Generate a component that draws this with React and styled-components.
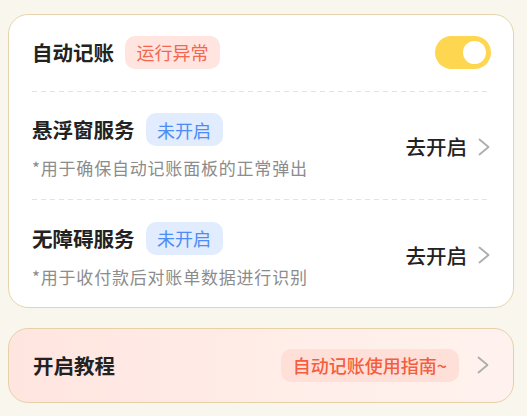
import React, { useState } from "react";
import styled, { createGlobalStyle } from "styled-components";

const GlobalStyle = createGlobalStyle`
  html, body { margin: 0; padding: 0; background: #f9f6ee; }
  body { font-family: "Noto Sans CJK SC", "Noto Sans", sans-serif; -webkit-font-smoothing: antialiased; }
  * { box-sizing: border-box; }
`;

const Page = styled.div`
  width: 527px;
  height: 416px;
  padding: 14px 13px 0 8px;
  display: flex;
  flex-direction: column;
  gap: 20px;
  background: #f9f6ee;
`;

const Card = styled.div`
  border: 1.5px solid #e6d4ae;
  border-radius: 20px;
  background: #ffffff;
  padding: 0 22px 0 23px;
`;

const GuideCard = styled.div`
  border: 1.5px solid #e8d0a6;
  border-radius: 20px;
  background: linear-gradient(to right, #ffe5e0 0%, #ffeee9 60%, #fff2ee 100%);
  height: 75px;
  padding: 0 23px 0 24px;
  display: flex;
  align-items: center;
`;

const Row = styled.div`
  display: flex;
  align-items: center;
  justify-content: space-between;
  padding: ${(p) => (p.$first ? "20.5px 0 22px" : "22.5px 0 19px")};
  background-image: ${(p) =>
    p.$first
      ? "none"
      : "repeating-linear-gradient(to right, #e3e3e3 0 5px, transparent 5px 9px)"};
  background-size: 100% 1px;
  background-repeat: no-repeat;
  background-position: top left;
  &:last-child { padding-bottom: 18px; }
`;

const Left = styled.div`
  display: flex;
  flex-direction: column;
  gap: 10px;
`;

const Head = styled.div`
  display: flex;
  align-items: center;
  gap: 11px;
  height: 33px;
`;

const Title = styled.span`
  font-size: 20.5px;
  font-weight: 600;
  color: #222222;
  line-height: 1;
  flex: ${(p) => (p.$grow ? 1 : "none")};
`;

const Badge = styled.span`
  display: inline-flex;
  align-items: center;
  height: 33px;
  padding: 0 ${(p) => (p.$pad ? p.$pad : 11.5)}px;
  border-radius: 10px;
  font-size: 18px;
  font-weight: ${(p) => (p.$strong ? 500 : 400)};
  line-height: 1;
  color: ${(p) => p.$fg};
  background: ${(p) => p.$bg};
`;

const Sub = styled.div`
  font-size: 17px;
  letter-spacing: 0.8px;
  line-height: 24px;
  color: #8c8c8c;
`;

const Action = styled.div`
  display: flex;
  align-items: center;
  gap: ${(p) => p.$gap || 10}px;
`;

const ActionText = styled.span`
  font-size: 20.5px;
  font-weight: 500;
  color: #222222;
  line-height: 1;
`;

const Toggle = styled.button`
  width: 56px;
  height: 33px;
  border-radius: 17px;
  border: none;
  padding: 0 5px;
  display: flex;
  align-items: center;
  justify-content: ${(p) => (p.$on ? "flex-end" : "flex-start")};
  background: ${(p) => (p.$on ? "#ffd64f" : "#e5e5e5")};
  cursor: pointer;
`;

const Knob = styled.span`
  width: 23px;
  height: 23px;
  border-radius: 50%;
  background: #ffffff;
`;

const Chevron = () => (
  <svg width="14" height="20" viewBox="0 0 14 20" fill="none">
    <path
      d="M2.5 2.5 L11.5 10 L2.5 17.5"
      stroke="#adadad"
      strokeWidth="1.8"
      strokeLinecap="round"
      strokeLinejoin="round"
    />
  </svg>
);

const services = [
  { title: "悬浮窗服务", desc: "*用于确保自动记账面板的正常弹出" },
  { title: "无障碍服务", desc: "*用于收付款后对账单数据进行识别" },
];

export default function App() {
  const [on, setOn] = useState(true);
  return (
    <>
      <GlobalStyle />
      <Page>
        <Card>
          <Row $first>
            <Head>
              <Title>自动记账</Title>
              <Badge $fg="#f4664d" $bg="#ffe4df">运行异常</Badge>
            </Head>
            <Toggle $on={on} onClick={() => setOn(!on)} aria-label="toggle">
              <Knob />
            </Toggle>
          </Row>
          {services.map((s) => (
            <Row key={s.title}>
              <Left>
                <Head>
                  <Title>{s.title}</Title>
                  <Badge $fg="#4d8bf5" $bg="#e2ecff">未开启</Badge>
                </Head>
                <Sub>{s.desc}</Sub>
              </Left>
              <Action>
                <ActionText>去开启</ActionText>
                <Chevron />
              </Action>
            </Row>
          ))}
        </Card>
        <GuideCard>
          <Title $grow>开启教程</Title>
          <Action $gap={17}>
            <Badge $fg="#f55d3e" $bg="#ffe0d9" $strong $pad={12}>
              自动记账使用指南~
            </Badge>
            <Chevron />
          </Action>
        </GuideCard>
      </Page>
    </>
  );
}
